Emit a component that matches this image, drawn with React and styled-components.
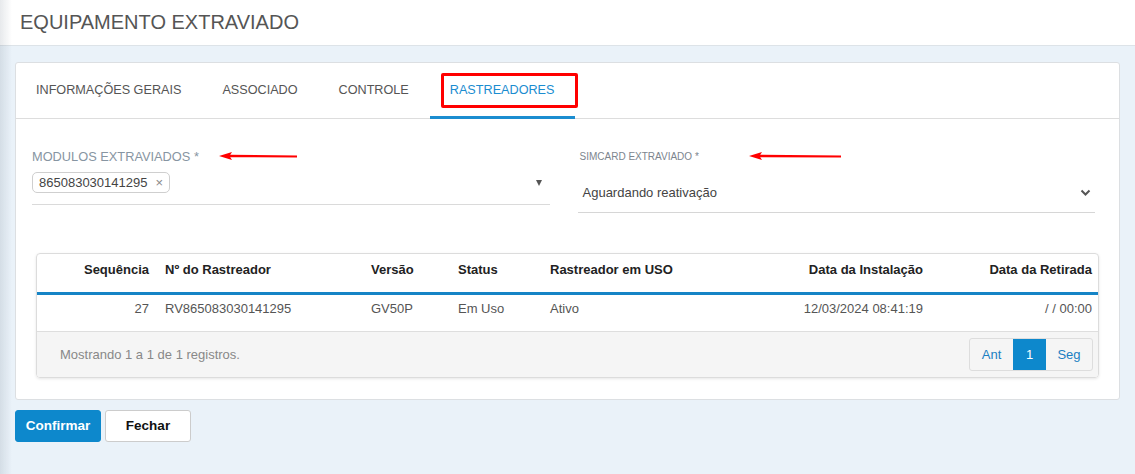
import React from "react";
import styled, { createGlobalStyle } from "styled-components";

const Global = createGlobalStyle`
  html, body { margin: 0; padding: 0; }
  body {
    background: #eaf2f9;
    font-family: "Liberation Sans", Arial, sans-serif;
    color: #555;
  }
  body::before {
    content: "";
    position: fixed;
    left: 0; top: 0; bottom: 0;
    width: 12px;
    background: linear-gradient(to right, rgba(60, 80, 100, 0.12), rgba(60, 80, 100, 0));
    pointer-events: none;
    z-index: 5;
  }
`;

const Page = styled.div`
  min-height: 474px;
`;

const Header = styled.header`
  height: 45px;
  background: #fff;
  border-bottom: 1px solid #dde3e8;
  display: flex;
  align-items: center;
  padding-left: 20px;
`;

const Title = styled.h1`
  margin: 0;
  font-family: "Liberation Sans", Arial, sans-serif;
  font-weight: 400;
  font-size: 20px;
  color: #555;
`;

const Body = styled.main`
  padding: 16px 15px 0 15px;
`;

const Card = styled.section`
  background: #fff;
  border: 1px solid #dcdfe2;
  border-radius: 3px;
  padding-bottom: 21px;
`;

const TabBar = styled.nav`
  display: flex;
  height: 55px;
  border-bottom: 1px solid #dddddd;
`;

const Tab = styled.div`
  position: relative;
  display: flex;
  align-items: center;
  padding: 0 21px 0 20px;
  font-family: "Liberation Sans", Arial, sans-serif;
  font-size: 12.65px;
  color: ${(p) => (p.$active ? "#1b8dd0" : "#555")};
  border-bottom: 3px solid ${(p) => (p.$active ? "#1b8dd0" : "transparent")};
  margin-bottom: -1px;
  box-sizing: border-box;
`;

const Highlight = styled.span`
  position: absolute;
  left: 11px;
  right: -3px;
  top: 10px;
  bottom: 8px;
  border: 3px solid #f00;
  border-radius: 2px;
  pointer-events: none;
`;

const FormRow = styled.div`
  display: grid;
  grid-template-columns: 1fr 1fr;
  column-gap: 28px;
  padding: 30px 24px 0 16px;
`;

const Field = styled.div`
  display: flex;
  flex-direction: column;
`;

const LabelRow = styled.div`
  display: flex;
  align-items: center;
  height: 14px;
`;

const Label = styled.label`
  font-family: "Liberation Sans", Arial, sans-serif;
  font-size: ${(p) => (p.$small ? "10px" : "12.8px")};
  color: ${(p) => (p.$small ? "#7c858e" : "#8795a2")};
  padding-left: ${(p) => (p.$small ? "2px" : "0")};
`;

const Arrow = styled.svg`
  display: block;
  margin-left: ${(p) => p.$gap}px;
`;

const MultiSelect = styled.div`
  display: flex;
  align-items: center;
  justify-content: space-between;
  margin-top: 9px;
  padding-bottom: 11px;
  border-bottom: 1px solid #dadada;
`;

const Chip = styled.span`
  display: inline-flex;
  align-items: center;
  gap: 8px;
  height: 19px;
  padding: 0 6px 0 6px;
  border: 1px solid #cfcfcf;
  border-radius: 5px;
  font-family: "Liberation Sans", Arial, sans-serif;
  font-size: 13px;
  color: #444;
`;

const ChipClose = styled.span`
  font-size: 13px;
  color: #888;
  line-height: 1;
`;

const Caret = styled.span`
  width: 0;
  height: 0;
  margin-right: 8px;
  border-left: 3.5px solid transparent;
  border-right: 3.5px solid transparent;
  border-top: 6px solid #555;
`;

const SelectBox = styled.div`
  display: flex;
  align-items: center;
  justify-content: space-between;
  margin-top: 22px;
  padding: 0 4px 12px 5px;
  border-bottom: 1px solid #d6d6d6;
  font-family: "Liberation Sans", Arial, sans-serif;
  font-size: 13px;
  color: #444;
`;

const TableWrap = styled.div`
  margin: 40px 20px 0 20px;
  border: 1px solid #dcdcdc;
  border-radius: 4px;
  box-shadow: 0 1px 3px rgba(0, 0, 0, 0.1);
  overflow: hidden;
`;

const Table = styled.table`
  width: 100%;
  border-collapse: collapse;
  table-layout: fixed;
  font-family: "Liberation Sans", Arial, sans-serif;
  font-size: 13px;
  line-height: 18px;
`;

const Th = styled.th`
  box-sizing: border-box;
  height: 39px;
  padding: 7px 8px 0;
  vertical-align: top;
  font-weight: 700;
  color: #222;
  text-align: ${(p) => p.$align || "left"};
  border-bottom: 3px solid #1684c6;
  white-space: nowrap;
`;

const Td = styled.td`
  box-sizing: border-box;
  height: 38px;
  padding: 5px 8px 0;
  vertical-align: top;
  color: #555;
  text-align: ${(p) => p.$align || "left"};
  border-bottom: 1px solid #dedede;
  white-space: nowrap;
`;

const Footer = styled.div`
  display: flex;
  align-items: center;
  justify-content: space-between;
  height: 45px;
  padding: 0 5px 0 23px;
  background: #f5f5f5;
  font-family: "Liberation Sans", Arial, sans-serif;
  font-size: 13px;
  color: #888;
`;

const Pager = styled.div`
  display: flex;
  height: 31px;
  border: 1px solid #dddddd;
  border-radius: 3px;
  overflow: hidden;
  background: #f5f5f5;
`;

const PageBtn = styled.span`
  display: flex;
  align-items: center;
  justify-content: center;
  width: ${(p) => p.$w}px;
  font-size: 13px;
  color: ${(p) => (p.$active ? "#fff" : "#1b7fc2")};
  background: ${(p) => (p.$active ? "#0d88cc" : "transparent")};
`;

const Actions = styled.div`
  display: flex;
  gap: 4px;
  margin-top: 10px;
`;

const Button = styled.button`
  height: 32px;
  width: ${(p) => p.$w}px;
  border-radius: 3px;
  font-family: "Liberation Sans", Arial, sans-serif;
  font-size: 13.5px;
  font-weight: 700;
  cursor: pointer;
  border: 1px solid ${(p) => (p.$primary ? "#0d88cc" : "#cccccc")};
  background: ${(p) => (p.$primary ? "#0d88cc" : "#fff")};
  color: ${(p) => (p.$primary ? "#fff" : "#111")};
`;

function RedArrow({ width, gap }) {
  return (
    <Arrow $gap={gap} width={width} height="10" viewBox={`0 0 ${width} 10`}>
      <path d={`M10 3.8 L${width} 4.4 L${width} 6.6 L10 6.2 Z`} fill="#f00" />
      <path d="M0 5 L13 1 L10.5 5 L13 9 Z" fill="#f00" />
    </Arrow>
  );
}

const columns = [
  { key: "seq", title: "Sequência", w: 120, align: "right" },
  { key: "num", title: "Nº do Rastreador", w: 206 },
  { key: "ver", title: "Versão", w: 87 },
  { key: "status", title: "Status", w: 92 },
  { key: "uso", title: "Rastreador em USO", w: 200 },
  { key: "inst", title: "Data da Instalação", w: 189, align: "right" },
  { key: "ret", title: "Data da Retirada", w: 169, align: "right" },
];

const rows = [
  {
    seq: "27",
    num: "RV865083030141295",
    ver: "GV50P",
    status: "Em Uso",
    uso: "Ativo",
    inst: "12/03/2024 08:41:19",
    ret: "/ / 00:00",
  },
];

const tabs = ["INFORMAÇÕES GERAIS", "ASSOCIADO", "CONTROLE", "RASTREADORES"];

export default function App() {
  return (
    <Page>
      <Global />
      <Header>
        <Title>EQUIPAMENTO EXTRAVIADO</Title>
      </Header>
      <Body>
        <Card>
          <TabBar>
            {tabs.map((t) => {
              const active = t === "RASTREADORES";
              return (
                <Tab key={t} $active={active}>
                  {t}
                  {active && <Highlight />}
                </Tab>
              );
            })}
          </TabBar>

          <FormRow>
            <Field>
              <LabelRow>
                <Label>MODULOS EXTRAVIADOS *</Label>
                <RedArrow width={78} gap={20} />
              </LabelRow>
              <MultiSelect>
                <Chip>
                  865083030141295
                  <ChipClose>×</ChipClose>
                </Chip>
                <Caret />
              </MultiSelect>
            </Field>
            <Field>
              <LabelRow>
                <Label $small>SIMCARD EXTRAVIADO *</Label>
                <RedArrow width={92} gap={50} />
              </LabelRow>
              <SelectBox>
                <span>Aguardando reativação</span>
                <svg width="11" height="8" viewBox="0 0 11 8">
                  <path d="M1.5 1.5 L5.5 5.5 L9.5 1.5" fill="none" stroke="#555" strokeWidth="2" />
                </svg>
              </SelectBox>
            </Field>
          </FormRow>

          <TableWrap>
            <Table>
              <colgroup>
                {columns.map((c) => (
                  <col key={c.key} style={{ width: c.w }} />
                ))}
              </colgroup>
              <thead>
                <tr>
                  {columns.map((c) => (
                    <Th key={c.key} $align={c.align}>
                      {c.title}
                    </Th>
                  ))}
                </tr>
              </thead>
              <tbody>
                {rows.map((r, i) => (
                  <tr key={i}>
                    {columns.map((c) => (
                      <Td key={c.key} $align={c.align}>
                        {r[c.key]}
                      </Td>
                    ))}
                  </tr>
                ))}
              </tbody>
            </Table>
            <Footer>
              <span>Mostrando 1 a 1 de 1 registros.</span>
              <Pager>
                <PageBtn $w={43}>Ant</PageBtn>
                <PageBtn $w={33} $active>
                  1
                </PageBtn>
                <PageBtn $w={46}>Seg</PageBtn>
              </Pager>
            </Footer>
          </TableWrap>
        </Card>
        <Actions>
          <Button $primary $w={86}>
            Confirmar
          </Button>
          <Button $w={86}>Fechar</Button>
        </Actions>
      </Body>
    </Page>
  );
}
